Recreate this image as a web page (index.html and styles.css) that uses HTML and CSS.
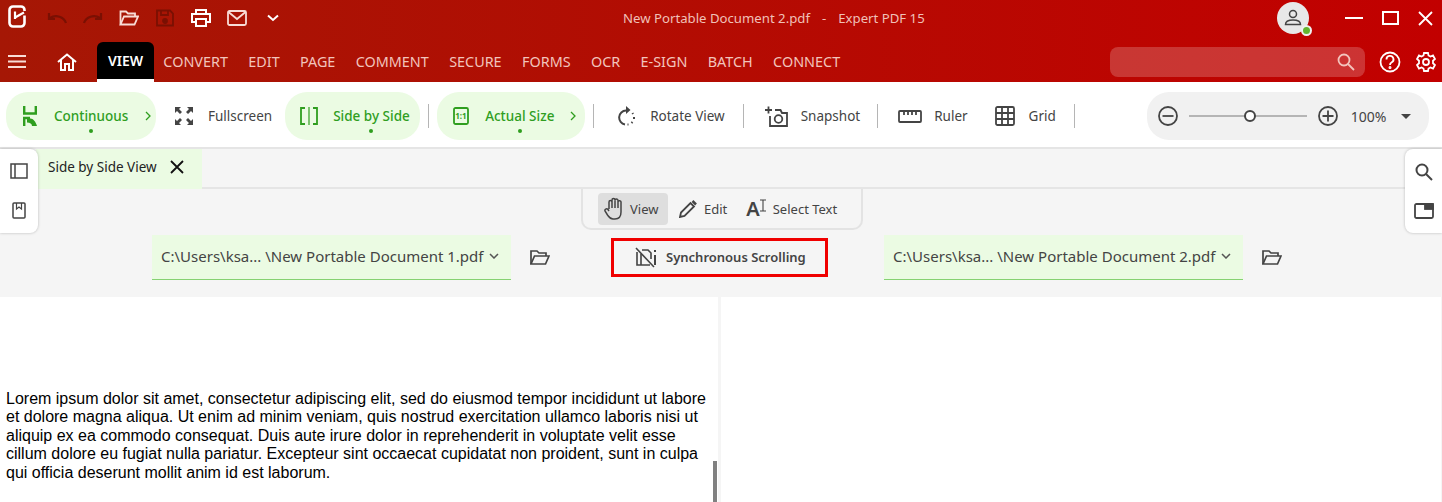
FILE: index.html
```html
<!DOCTYPE html>
<html lang="en">
<head>
    <meta charset="UTF-8">
    <title>New Portable Document 2.pdf - Expert PDF 15</title>
    <link rel="stylesheet" href="styles.css">
</head>
<body>
    <div class="app-head">
        <div class="title-row">
            <svg class="logo" width="18" height="23" viewBox="0 0 18 23" fill="none" stroke="#fff" stroke-width="2.6"><path d="M16.500 6V5A3.500 3.500 0 0 0 13 1.500H5A3.500 3.500 0 0 0 1.500 5V18A3.500 3.500 0 0 0 5 21.500H13A3.500 3.500 0 0 0 16.500 18V10.500"/><path d="M16 7.500L7 12.500" stroke-width="2.200"/><path d="M7 6.500V14" stroke-width="2.200"/></svg>
            <div class="quick-tools">
                <span class="quick-btn"><svg width="20" height="12" viewBox="0 0 20 12" fill="none" stroke="#7a1003" stroke-width="2.2"><path d="M19 11C17 5 9 2 3 6"/><path d="M2 1V7H8"/></svg></span>
                <span class="quick-btn"><svg width="20" height="12" viewBox="0 0 20 12" fill="none" stroke="#7a1003" stroke-width="2.2"><path d="M1 11C3 5 11 2 17 6"/><path d="M18 1V7H12"/></svg></span>
                <span class="quick-btn"><svg width="20" height="16" viewBox="0 0 20 16" fill="none" stroke="#f8dcd6" stroke-width="1.8"><path d="M1.500 14.500V1.500H7L9 3.500H16V6.500"/><path d="M1.500 14.500L5 6.500H19L15.500 14.500Z"/></svg></span>
                <span class="quick-btn"><svg width="18" height="18" viewBox="0 0 18 18" fill="none" stroke="#7a1003" stroke-width="1.8"><path d="M1 1.500H14L17 4.500V16.500H1Z"/><path d="M5 1.500V6H12V1.500"/><circle cx="9" cy="12" r="2" fill="#7a1003"/></svg></span>
                <span class="quick-btn"><svg width="20" height="18" viewBox="0 0 20 18" fill="none" stroke="#fff" stroke-width="2"><path d="M5 5V1H15V5"/><path d="M5 13H1V5H19V13H15"/><path d="M5 10H15V17H5Z"/></svg></span>
                <span class="quick-btn"><svg width="20" height="16" viewBox="0 0 20 16" fill="none" stroke="#f8dcd6" stroke-width="1.8"><rect x="1" y="1" width="18" height="14" rx="1.500"/><path d="M1.500 2L10 9L18.500 2"/></svg></span>
                <span class="quick-btn"><svg width="12" height="8" viewBox="0 0 12 8" fill="none" stroke="#fff" stroke-width="2"><path d="M1 1.500L6 6L11 1.500"/></svg></span>
            </div>
            <div class="doc-title">New Portable Document 2.pdf<span class="dash">-</span>Expert PDF 15</div>
            <div class="avatar">
                <svg width="18" height="18" viewBox="0 0 18 18" fill="none" stroke="#444" stroke-width="1.500"><circle cx="9" cy="5" r="3.500"/><path d="M1.500 15.500C1.500 12 5 11 9 11S16.500 12 16.500 15.500Z"/></svg>
                <span class="avatar-dot"></span>
            </div>
            <div class="win-btns">
                <svg width="18" height="2" viewBox="0 0 18 2"><rect width="18" height="2" fill="#fff"/></svg>
                <svg width="17" height="14" viewBox="0 0 17 14" fill="none" stroke="#fff" stroke-width="2"><rect x="1" y="1" width="15" height="12"/></svg>
                <svg width="15" height="15" viewBox="0 0 15 15" fill="none" stroke="#fff" stroke-width="1.800"><path d="M1 1L14 14M14 1L1 14"/></svg>
            </div>
        </div>
        <div class="menu-row">
            <svg class="burger" width="18" height="13" viewBox="0 0 18 13" fill="#f8dcd6"><rect width="18" height="2"/><rect y="5.500" width="18" height="2"/><rect y="11" width="18" height="2"/></svg>
            <svg class="home" width="20" height="18" viewBox="0 0 20 18" fill="none" stroke="#fff" stroke-width="2"><path d="M1 9L10 1.500L19 9"/><path d="M4 7V17H8V11H12V17H16V7"/></svg>
            <nav class="menu">
                <span class="menu-item active">VIEW</span>
                <span class="menu-item">CONVERT</span>
                <span class="menu-item">EDIT</span>
                <span class="menu-item">PAGE</span>
                <span class="menu-item">COMMENT</span>
                <span class="menu-item">SECURE</span>
                <span class="menu-item">FORMS</span>
                <span class="menu-item">OCR</span>
                <span class="menu-item">E-SIGN</span>
                <span class="menu-item">BATCH</span>
                <span class="menu-item">CONNECT</span>
            </nav>
            <div class="search-box">
                <svg width="18" height="18" viewBox="0 0 18 18" fill="none" stroke="#f3c4bd" stroke-width="1.800"><circle cx="7" cy="7" r="5.500"/><path d="M11 11L17 17"/></svg>
            </div>
            <svg class="help" width="22" height="22" viewBox="0 0 22 22" fill="none" stroke="#fff" stroke-width="1.800"><circle cx="11" cy="11" r="9.500"/><path d="M7.500 8.500A3.500 3.500 0 1 1 12.500 11.500C11.500 12 11 12.500 11 14"/><circle cx="11" cy="16.500" r="0.600"/></svg>
            <svg class="gear" width="20" height="20" viewBox="0 0 20 20" fill="none" stroke="#fff" stroke-width="1.800"><path d="M8 1H12L12.500 3.500L14.500 4.500L17 3.500L19 7L17 8.700V11.300L19 13L17 16.500L14.500 15.500L12.500 16.500L12 19H8L7.500 16.500L5.500 15.500L3 16.500L1 13L3 11.300V8.700L1 7L3 3.500L5.500 4.500L7.500 3.500Z"/><circle cx="10" cy="10" r="3"/></svg>
        </div>
    </div>

    <div class="toolbar">
        <div class="tool pill pill-continuous">
            <svg width="14" height="20" viewBox="0 0 14 20" fill="none" stroke="#2f9e1f" stroke-width="2.400"><path d="M1.200 0V7.500H12.800V0"/><path d="M1.200 20V12H7"/><path d="M4 12.500H7.500C10 12.500 13 16 14 20H9C9 18 7 16.500 4 16.500Z" fill="#2f9e1f" stroke="none"/></svg>
            <span class="label">Continuous</span>
            <svg class="arrow" width="6" height="10" viewBox="0 0 6 10" fill="none" stroke="#2f9e1f" stroke-width="1.300"><path d="M1 1L5 5L1 9"/></svg>
        </div>
        <div class="tool tool-fullscreen">
            <svg width="18" height="18" viewBox="0 0 18 18" fill="#444"><path d="M0 0H6L4 2L7 5L5 7L2 4L0 6ZM18 0V6L16 4L13 7L11 5L14 2L12 0ZM0 18V12L2 14L5 11L7 13L4 16L6 18ZM18 18H12L14 16L11 13L13 11L16 14L18 12Z"/></svg>
            <span class="label">Fullscreen</span>
        </div>
        <div class="tool pill pill-side">
            <svg width="18" height="18" viewBox="0 0 18 18" fill="none" stroke="#2f9e1f" stroke-width="1.800"><path d="M5 1H1V17H5M13 1H17V17H13"/><path d="M9 0V18" stroke-width="1.200"/></svg>
            <span class="label">Side by Side</span>
        </div>
        <span class="sep"></span>
        <div class="tool pill pill-actual">
            <svg width="16" height="18" viewBox="0 0 16 18"><rect x="1" y="1" width="14" height="16" rx="1.500" fill="none" stroke="#2f9e1f" stroke-width="1.800"/><text x="8" y="12" class="ratio">1:1</text></svg>
            <span class="label">Actual Size</span>
            <svg class="arrow" width="6" height="10" viewBox="0 0 6 10" fill="none" stroke="#2f9e1f" stroke-width="1.300"><path d="M1 1L5 5L1 9"/></svg>
        </div>
        <span class="sep"></span>
        <div class="tool tool-rotate">
            <svg width="18" height="20" viewBox="0 0 18 20" fill="none" stroke="#444" stroke-width="2"><path d="M8 4.500A7 7 0 0 0 7 18.400"/><path d="M8 0V8L12.500 4Z" fill="#444" stroke="none"/><path d="M14.500 7L15 8M16 11V13M14.500 16L13.500 17M10.500 18.500H9.500"/></svg>
            <span class="label">Rotate View</span>
        </div>
        <span class="sep"></span>
        <div class="tool tool-snapshot">
            <svg width="23" height="21" viewBox="0 0 23 21" fill="none" stroke="#444" stroke-width="1.800"><path d="M0 4H7M3.500 0.500V7.500"/><path d="M5 10V20H22V7H17L15.500 4H10"/><circle cx="13.500" cy="13" r="3.800"/></svg>
            <span class="label">Snapshot</span>
        </div>
        <span class="sep"></span>
        <div class="tool tool-ruler">
            <svg width="24" height="13" viewBox="0 0 24 13" fill="none" stroke="#444" stroke-width="1.800"><rect x="1" y="1" width="22" height="11" rx="1"/><path d="M6 1V5M10 1V5M14 1V5M18 1V5"/></svg>
            <span class="label">Ruler</span>
        </div>
        <div class="tool tool-grid">
            <svg width="20" height="20" viewBox="0 0 20 20" fill="none" stroke="#444" stroke-width="1.800"><rect x="1" y="1" width="18" height="18" rx="1.500"/><path d="M7 1V19M13 1V19M1 7H19M1 13H19"/></svg>
            <span class="label">Grid</span>
        </div>
        <span class="sep sep-grid"></span>
        <div class="zoom-box">
            <svg width="20" height="20" viewBox="0 0 20 20" fill="none" stroke="#444" stroke-width="1.800"><circle cx="10" cy="10" r="9"/><path d="M4.500 10H15.500"/></svg>
            <div class="zoom-track"><span class="zoom-thumb"></span></div>
            <svg width="20" height="20" viewBox="0 0 20 20" fill="none" stroke="#444" stroke-width="1.800"><circle cx="10" cy="10" r="9"/><path d="M4.500 10H15.500M10 4.500V15.500"/></svg>
            <span class="zoom-value">100%</span>
            <span class="zoom-caret"></span>
        </div>
    </div>

    <div class="compare-area">
        <div class="tab-strip">
            <div class="tab">
                <span>Side by Side View</span>
                <svg width="14" height="14" viewBox="0 0 14 14" fill="none" stroke="#111" stroke-width="1.800"><path d="M1 1L13 13M13 1L1 13"/></svg>
            </div>
        </div>
        <div class="compare-head">
            <div class="mode-bar">
                <div class="mode active">
                    <svg width="21" height="23" viewBox="0 0 21 23" fill="none" stroke="#444" stroke-width="1.500"><path d="M5 12V5A1.500 1.500 0 0 1 8 5V3A1.500 1.500 0 0 1 11 3V3.500A1.500 1.500 0 0 1 14 3.500V5A1.500 1.500 0 0 1 17 5.500V15C17 19 15 22 11 22H9C6 22 5 20 3.500 18L1 14C0.500 12.500 2.500 11 4 12.500L5 14"/><path d="M8 5V11M11 3.500V11M14 5V11"/></svg>
                    <span>View</span>
                </div>
                <div class="mode mode-edit">
                    <svg width="18" height="18" viewBox="0 0 18 18" fill="none" stroke="#444" stroke-width="1.800"><path d="M1 17L2 12.500L11.500 3L15 6.500L5.500 16Z"/><path d="M13.500 1L17 4.500" stroke-width="2.500"/></svg>
                    <span>Edit</span>
                </div>
                <div class="mode mode-select">
                    <span class="big-a">A</span>
                    <svg class="text-cursor" width="6" height="13" viewBox="0 0 6 13" fill="none" stroke="#444" stroke-width="1.100"><path d="M0 1H6M0 12H6M3 1V12"/></svg>
                    <span>Select Text</span>
                </div>
            </div>
            <div class="file-row">
                <div class="file-select">
                    <span>C:\Users\ksa... \New Portable Document 1.pdf</span>
                    <svg width="10" height="6" viewBox="0 0 10 6" fill="none" stroke="#555" stroke-width="1.500"><path d="M1 1L5 5L9 1"/></svg>
                </div>
                <svg class="folder" width="20" height="15" viewBox="0 0 20 15" fill="none" stroke="#444" stroke-width="1.700"><path d="M1 14V1H7L9 3H16V6"/><path d="M1 14L4.500 6H19L15.500 14Z"/></svg>
                <div class="sync-btn">
                    <svg width="22" height="21" viewBox="0 0 22 21" fill="none" stroke="#444" stroke-width="1.600"><path d="M1 1L19 20"/><path d="M2 5V18H6M7 3H13L16 6V12M6 7V18H15"/><path d="M20 8V18" stroke-width="2"/><path d="M20 3V5" stroke-width="2"/></svg>
                    <span>Synchronous Scrolling</span>
                </div>
                <div class="file-select file-select-right">
                    <span>C:\Users\ksa... \New Portable Document 2.pdf</span>
                    <svg width="10" height="6" viewBox="0 0 10 6" fill="none" stroke="#555" stroke-width="1.500"><path d="M1 1L5 5L9 1"/></svg>
                </div>
                <svg class="folder" width="20" height="15" viewBox="0 0 20 15" fill="none" stroke="#444" stroke-width="1.700"><path d="M1 14V1H7L9 3H16V6"/><path d="M1 14L4.500 6H19L15.500 14Z"/></svg>
            </div>
        </div>
        <div class="side-panel side-left">
            <svg width="18" height="16" viewBox="0 0 18 16" fill="none" stroke="#444" stroke-width="1.500"><rect x="1" y="1" width="16" height="14"/><path d="M5 1V15"/></svg>
            <svg width="14" height="17" viewBox="0 0 14 17" fill="none" stroke="#444" stroke-width="1.500"><rect x="1" y="1" width="12" height="15" rx="1"/><path d="M4.500 1V7L7 5L9.500 7V1" stroke-width="1.200"/></svg>
        </div>
        <div class="side-panel side-right">
            <svg width="18" height="18" viewBox="0 0 18 18" fill="none" stroke="#444" stroke-width="2"><circle cx="7" cy="7" r="5.500"/><path d="M11 11L17 17"/></svg>
            <svg width="20" height="16" viewBox="0 0 20 16" fill="none" stroke="#444" stroke-width="1.800"><rect x="1" y="1" width="18" height="14" rx="1.500"/><rect x="11" y="1" width="8" height="5" fill="#444"/></svg>
        </div>
    </div>

    <div class="pages">
        <div class="page page-left">
            <p>Lorem ipsum dolor sit amet, consectetur adipiscing elit, sed do eiusmod tempor incididunt ut labore et dolore magna aliqua. Ut enim ad minim veniam, quis nostrud exercitation ullamco laboris nisi ut aliquip ex ea commodo consequat. Duis aute irure dolor in reprehenderit in voluptate velit esse cillum dolore eu fugiat nulla pariatur. Excepteur sint occaecat cupidatat non proident, sunt in culpa qui officia deserunt mollit anim id est laborum.</p>
            <span class="scroll-thumb"></span>
        </div>
        <div class="page page-right"></div>
    </div>
</body>
</html>
```

FILE: styles.css
```css
* {
    margin: 0;
    padding: 0;
    box-sizing: border-box;
}
body {
    width: 1442px;
    height: 502px;
    overflow: hidden;
    background: #f5f5f5;
    font-family: 'Noto Sans', sans-serif;
    font-size: 14px;
    color: #444;
}
svg {
    display: block;
    flex-shrink: 0;
}

/* title + menu */
.app-head {
    height: 82px;
    background: linear-gradient(90deg, #a51705, #c20000);
}
.title-row {
    height: 41px;
    display: flex;
    align-items: center;
    position: relative;
}
.logo {
    margin-left: 8px;
    margin-top: -9px;
}
.quick-tools {
    display: flex;
    align-items: center;
    margin-left: 13px;
    margin-top: -5px;
}
.quick-btn {
    width: 36px;
    display: flex;
    align-items: center;
    justify-content: center;
}
.doc-title {
    margin-left: 332px;
    margin-top: -5px;
    width: 300px;
    color: #f0c0b8;
    font-size: 13.2px;
    white-space: nowrap;
}
.dash {
    margin: 0 12px;
}
.avatar {
    width: 32px;
    height: 32px;
    margin-left: 354px;
    margin-top: -5px;
    border-radius: 50%;
    background: #e8e8e8;
    display: flex;
    align-items: center;
    justify-content: center;
    position: relative;
}
.avatar-dot {
    position: absolute;
    right: -3px;
    bottom: -2px;
    width: 11px;
    height: 11px;
    border-radius: 50%;
    background: #63b52e;
    border: 2px solid #f0f0f0;
}
.win-btns {
    display: flex;
    align-items: center;
    gap: 19px;
    margin-left: 36px;
    margin-top: -5px;
}
.menu-row {
    height: 41px;
    display: flex;
    align-items: center;
}
.burger {
    margin-left: 8px;
}
.home {
    margin-left: 31px;
    margin-right: 20px;
}
.menu {
    height: 41px;
    display: flex;
    align-items: center;
    gap: 20.35px;
}
.menu-item {
    color: #f2c4bc;
    font-size: 14.4px;
    white-space: nowrap;
}
.menu-item.active {
    height: 40px;
    width: 57px;
    margin-top: 1px;
    margin-right: -11px;
    display: flex;
    align-items: center;
    justify-content: center;
    font-size: 14px;
    color: #fff;
    font-weight: 600;
    background: #000;
    border-bottom: 3px solid #fff;
    border-radius: 6px 6px 0 0;
}
.search-box {
    width: 255px;
    height: 30px;
    margin-left: auto;
    border-radius: 8px;
    background: rgba(255, 255, 255, 0.2);
    display: flex;
    align-items: center;
    justify-content: flex-end;
    padding-right: 10px;
}
.help {
    margin-left: 14px;
}
.gear {
    margin-left: 15px;
    margin-right: 6px;
}

/* toolbar */
.toolbar {
    height: 67px;
    background: #fff;
    border-bottom: 2px solid #e5e5e5;
    display: flex;
    align-items: center;
    padding: 3px 0 0 6px;
}
.tool {
    height: 48px;
    display: flex;
    align-items: center;
    flex-shrink: 0;
    font-size: 13.5px;
    white-space: nowrap;
}
.pill {
    background: #ebfbe3;
    border-radius: 22px;
    color: #2f9e1f;
    font-weight: 500;
}
.pill .label {
    position: relative;
}
/* active marker sits under the label, not under the pill */
.pill .label::after {
    content: "";
    position: absolute;
    bottom: -8px;
    left: 50%;
    width: 4px;
    height: 4px;
    margin-left: -2px;
    border-radius: 50%;
    background: #2f9e1f;
}
.pill-continuous {
    width: 150px;
    padding-left: 17px;
    gap: 17px;
}
.pill-side {
    width: 135px;
    margin-left: 13px;
    padding-left: 15px;
    gap: 15px;
}
.pill-actual {
    width: 148px;
    padding-left: 16px;
    gap: 16px;
}
.arrow {
    margin-left: auto;
    margin-right: 9px;
}
.ratio {
    font-family: 'Noto Sans', sans-serif;
    font-size: 8px;
    font-weight: 700;
    fill: #2f9e1f;
    text-anchor: middle;
}
.tool-fullscreen {
    margin-left: 19px;
    gap: 15px;
}
.tool-rotate {
    margin-left: 16px;
    gap: 14px;
}
.tool-snapshot {
    margin-left: 21px;
    gap: 13px;
}
.tool-ruler {
    margin-left: 20px;
    gap: 12px;
}
.tool-grid {
    margin-left: 27px;
    gap: 14px;
}
.sep {
    width: 1px;
    height: 24px;
    margin: 0 8px;
    background: #b5b5b5;
    flex-shrink: 0;
}
.tool-rotate + .sep,
.sep-grid {
    margin: 0 0 0 18px;
}
.tool-snapshot + .sep {
    margin: 0 0 0 17px;
}
.zoom-box {
    width: 282px;
    height: 48px;
    margin-left: 72px;
    border-radius: 22px;
    background: #f1f1f1;
    display: flex;
    align-items: center;
    padding-left: 11px;
}
.zoom-track {
    width: 118px;
    height: 2px;
    margin: 0 11px;
    background: #b5b5b5;
    position: relative;
}
.zoom-thumb {
    position: absolute;
    left: 55px;
    top: -5px;
    width: 12px;
    height: 12px;
    border-radius: 50%;
    background: #fff;
    border: 2px solid #444;
}
.zoom-value {
    margin-left: 13px;
    font-size: 14px;
}
.zoom-caret {
    margin-left: 15px;
    border-left: 5px solid transparent;
    border-right: 5px solid transparent;
    border-top: 5px solid #444;
}

/* compare header */
.compare-area {
    height: 148px;
    position: relative;
}
.tab-strip {
    height: 40px;
    border-bottom: 2px solid #e5e5e5;
    padding-left: 36px;
}
.tab {
    width: 166px;
    height: 40px;
    background: #ebfbe3;
    display: flex;
    align-items: center;
    padding: 0 0 4px 12px;
    gap: 13px;
    font-size: 13.5px;
    color: #222;
    white-space: nowrap;
}
.compare-head {
    height: 108px;
    background: #f5f5f5;
}
.mode-bar {
    width: 282px;
    height: 41px;
    margin-left: 581px;
    border: 2px solid #e3e3e3;
    border-top: 0;
    border-radius: 0 0 10px 10px;
    display: flex;
    align-items: center;
    font-size: 13px;
}
.mode {
    height: 32px;
    display: flex;
    align-items: center;
    gap: 5px;
    white-space: nowrap;
}
.mode.active {
    width: 70px;
    margin-left: 15px;
    padding-left: 6px;
    background: #dedede;
    border-radius: 4px;
}
.mode-edit {
    margin-left: 11px;
    gap: 7px;
}
.mode-select {
    margin-left: 19px;
    gap: 0;
}
.mode-select span:last-child {
    margin-left: 7px;
}
.big-a {
    font-size: 20px;
    font-weight: 600;
    line-height: 20px;
}
.text-cursor {
    margin-top: -7px;
}
.file-row {
    display: flex;
    align-items: center;
    margin-top: 5px;
    padding-left: 152px;
}
.file-select {
    width: 359px;
    height: 45px;
    background: #ebfbe3;
    border-bottom: 1px solid #86d272;
    display: flex;
    align-items: center;
    padding: 0 0 2px 9px;
    gap: 6px;
    font-size: 15px;
    white-space: nowrap;
}
.folder {
    margin-left: 19px;
}
.sync-btn {
    width: 217px;
    height: 39px;
    margin-left: 61px;
    border: 3px solid #f00000;
    display: flex;
    align-items: center;
    padding: 0 0 1px 21px;
    gap: 9px;
    font-size: 13px;
    font-weight: 600;
    white-space: nowrap;
}
.file-select-right {
    margin-left: 56px;
}

/* floating side panels */
.side-panel {
    position: absolute;
    top: 0;
    width: 38px;
    height: 84px;
    background: #fff;
    display: flex;
    flex-direction: column;
    align-items: center;
    justify-content: space-between;
    padding: 14px 0;
    box-shadow: 0 0 3px rgba(0, 0, 0, 0.25);
}
.side-left {
    left: 0;
    border-radius: 0 8px 8px 0;
}
.side-right {
    right: 0;
    width: 37px;
    border-radius: 8px 0 0 8px;
}

/* pages */
.pages {
    height: 205px;
    display: flex;
    padding-right: 1px;
}
.page {
    background: #fff;
    height: 205px;
}
.page-left {
    width: 718px;
    position: relative;
    padding: 93px 0 0 6px;
}
.page-left p {
    width: 706px;
    font-family: 'Liberation Sans', Arial, sans-serif;
    font-size: 16px;
    line-height: 18.4px;
    color: #000;
}
.page-right {
    flex: 1;
    margin-left: 3px;
}
.scroll-thumb {
    position: absolute;
    right: 1px;
    bottom: 0;
    width: 4px;
    height: 41px;
    background: #808080;
}
```
